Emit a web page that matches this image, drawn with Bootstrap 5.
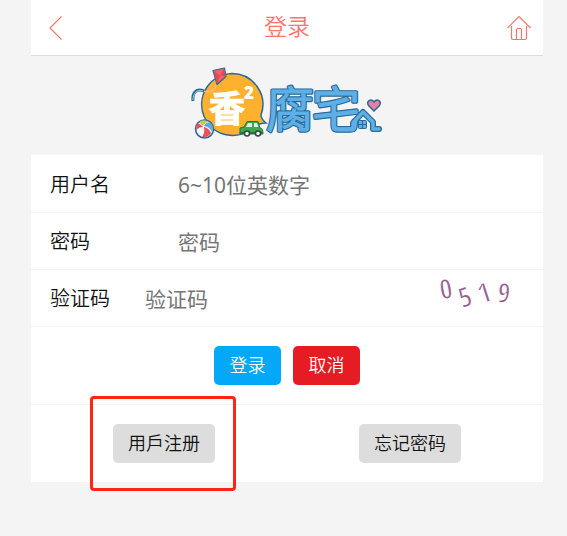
<!DOCTYPE html>
<html lang="zh-CN">
<head>
<meta charset="utf-8">
<meta name="viewport" content="width=device-width, initial-scale=1">
<title>登录</title>
<link href="https://cdn.jsdelivr.net/npm/bootstrap@5.3.0/dist/css/bootstrap.min.css" rel="stylesheet">
<style>
body { background: #f4f4f4; color: #111; font-family: "Noto Sans", "Noto Sans CJK SC", sans-serif; font-weight: 350; font-size: 20px; line-height: 30px; }
.page-shell { padding: 0 24px 24px 31px; }
.top-bar { border-bottom: 1px solid #dbdbdb; padding: 0 12px 0 18px; height: 56px; }
.top-bar a, .top-bar h1 { color: #fa766b; }
.top-bar h1 { font-size: 23px; line-height: 32px; font-weight: 350; }
.top-bar svg { display: block; fill: none; stroke: currentColor; stroke-width: 1.2; }
.logo-area { padding: 10px 0 15px; }
.logo-area svg { overflow: visible; }
.login-form { padding-top: 1px; }
.line { border-bottom: 1px solid #f3f3f3; }
.field { padding: 14px 20px 12px 19px; }
.field label { width: 128px; flex-shrink: 0; }
.field .label-short { width: 95px; }
.field input { border: 0; padding: 0; background: transparent; font-weight: 400; font-size: 21px; line-height: 30px; height: 30px; min-width: 0; outline-offset: 4px; }
.field input::placeholder { color: #757575; opacity: 1; }
.captcha-art { font-family: "Open Sans Condensed", "Roboto Condensed", Roboto, sans-serif; font-size: 28px; font-weight: 300; fill: #936291; stroke: #fff; stroke-width: 1.3; margin: -9px 0; overflow: visible; }
.actions { padding: 19px 10px; }
.actions .btn { font-size: 18px; line-height: 27px; font-weight: 350; padding: 6px 15px; border: 0; border-radius: 5px; min-width: 67px; }
.actions-main { gap: 12px; }
.btn-login, .btn-login:hover { background: #03a9f8; color: #fff; }
.btn-cancel, .btn-cancel:hover { background: #e61c24; color: #fff; }
.btn-soft, .btn-soft:hover { background: #ddd; color: #111; }
.highlight-box { position: absolute; inset: -28px -21px -28px -23px; border: 3px solid #ff2414; border-radius: 4px; pointer-events: none; }
</style>
</head>
<body class="min-vh-100">
<div class="page-shell">
  <header class="top-bar bg-white d-flex justify-content-between align-items-center">
    <a href="#back" aria-label="返回"><svg width="18" height="26" viewBox="0 0 18 26"><path d="M12.5 1.500L1 13L12.500 24.500"/></svg></a>
    <h1 class="m-0 pb-1">登录</h1>
    <a href="#home" aria-label="首页"><svg width="24" height="26" viewBox="0 0 24 26"><path d="M.5 13L12 1.500L23.500 13M4.500 11V23Q4.500 24.500 6 24.500H18Q19.500 24.500 19.500 23V11M9.500 24V14.500Q9.500 13.500 10.500 13.500H13.500Q14.500 13.500 14.500 14.500V24"/></svg></a>
  </header>

  <div class="logo-area d-flex justify-content-center">
    <svg width="194" height="74" viewBox="190 66 194 74" role="img" aria-label="香²腐宅">
      <!-- speech bubble -->
      <path d="M232 73.500A31 31 0 1 0 254 127Q259 123 266 123Q261 119 261 115A31 31 0 0 0 232 73.500Z" fill="#ffb12d" stroke="#286b98" stroke-width="1.500"/>
      <!-- kite -->
      <path d="M217 84C214 93 206 92 203 91" fill="none" stroke="#f3ba83" stroke-width="1.500"/>
      <path d="M204 91C196 88 192 93 193 101" fill="none" stroke="#286b98" stroke-width="3"/>
      <path d="M203 91C197 89 193 93 193 100" fill="none" stroke="#a5cce0" stroke-width="1"/>
      <path d="M213 70.500L224.500 68L226 76.500L217 84.500Z" fill="#f2606a" stroke="#286b98" stroke-width="1.200" stroke-linejoin="round"/>
      <path d="M213.500 71L220 75.500L217 84ZM224 68.500L220 75.500L225.500 76.500Z" fill="#e34a57"/>
      <g font-family="Noto Sans CJK SC, sans-serif" font-weight="900">
        <text x="209" y="122" font-size="36" font-weight="700" fill="#fff" stroke="#fff" stroke-width="1">香</text>
        <text x="244" y="99" font-size="17" fill="#fff" font-family="Noto Sans, sans-serif">2</text>
      </g>
      <!-- beach ball -->
      <circle cx="204.500" cy="129" r="9" fill="#f5f5f5" stroke="#286b98" stroke-width="1.500"/>
      <path d="M203 127Q196 120 196.500 126L196 131Q198 127 203 127Z" fill="#e9505d"/>
      <path d="M204 127Q205 133 202 137Q208 138 211 133Q209 128 204 127Z" fill="#e9505d"/>
      <path d="M204 126Q206 121 211 123Q214 127 212 132Q210 127 204 126Z" fill="#5cabd5"/>
      <path d="M203 126Q199 123 200 121Q205 119 209 122Q205 122 203 126Z" fill="#bccb54"/>
      <!-- car -->
      <path d="M240 134V128L244 127L247 121.500H258L260 128Q263 128 263 134Z" fill="#3ba94c" stroke="#267442" stroke-width="1"/>
      <path d="M246 127L248 123H252V127ZM254 123H257L258.500 127H254Z" fill="#dff1df"/>
      <path d="M239.500 133H263" stroke="#267442" stroke-width="2"/>
      <circle cx="247" cy="133.500" r="2.500" fill="#fff" stroke="#334642" stroke-width="1.500"/>
      <circle cx="258" cy="133.500" r="2.500" fill="#fff" stroke="#334642" stroke-width="1.500"/>
      <!-- name and house: dark outline beneath, light blue above -->
      <g font-family="Noto Sans CJK SC, sans-serif" font-weight="350" font-size="48" stroke-linejoin="round" stroke-linecap="round">
        <g fill="#286b98" stroke="#286b98" stroke-width="3.500">
          <text x="266" y="127">腐</text><text x="312" y="127">宅</text>
          <path d="M348 129H353V123L363 112L373 122V129H379" fill="none" stroke-width="6"/>
        </g>
        <g fill="#5eafe6" stroke="#5eafe6" stroke-width="1.200">
          <text x="266" y="127">腐</text><text x="312" y="127">宅</text>
          <path d="M348 129H353V123L363 112L373 122V129H379" fill="none" stroke-width="3.500"/>
        </g>
      </g>
      <rect x="358.500" y="120.500" width="8" height="8" rx="1" fill="#5eafe6" stroke="#286b98"/>
      <path d="M362.500 121V128M359 124.500H366" stroke="#286b98"/>
      <path d="M374 111L368.500 105.500C366 101 371 98 374 102C377 98 382 101 379.500 105.500Z" fill="#ed7da5" stroke="#286b98" stroke-width="1.500"/>
    </svg>
  </div>

  <form class="login-form bg-white">
    <div class="line field d-flex align-items-center">
      <label for="username">用户名</label>
      <input class="flex-grow-1" id="username" type="text" placeholder="6~10位英数字">
    </div>
    <div class="line field d-flex align-items-center">
      <label for="password">密码</label>
      <input class="flex-grow-1" id="password" type="password" placeholder="密码">
    </div>
    <div class="line field d-flex align-items-center">
      <label class="label-short" for="captcha">验证码</label>
      <input class="flex-grow-1" id="captcha" type="text" placeholder="验证码">
      <svg class="captcha-art flex-shrink-0" width="90" height="48" viewBox="0 0 90 48" text-anchor="middle" role="img" aria-label="验证码图片">
        <text transform="translate(13 14) rotate(-10)" y="10">0</text>
        <text transform="translate(32 22) rotate(-18)" y="10">5</text>
        <text transform="translate(51 18) rotate(-18)" y="10">1</text>
        <text transform="translate(71 18) rotate(6)" y="10">9</text>
      </svg>
    </div>
    <div class="line actions actions-main d-flex justify-content-center">
      <button class="btn btn-login" type="submit">登录</button>
      <button class="btn btn-cancel" type="reset">取消</button>
    </div>
    <div class="actions">
      <div class="row g-0 text-center">
        <div class="col d-flex justify-content-center">
          <div class="position-relative d-flex">
            <button class="btn btn-soft" type="button">用戶注册</button>
            <span class="highlight-box"></span>
          </div>
        </div>
        <div class="col d-flex justify-content-center">
          <button class="btn btn-soft" type="button">忘记密码</button>
        </div>
      </div>
    </div>
  </form>
</div>
<script src="https://cdn.jsdelivr.net/npm/bootstrap@5.3.0/dist/js/bootstrap.bundle.min.js"></script>
</body>
</html>
